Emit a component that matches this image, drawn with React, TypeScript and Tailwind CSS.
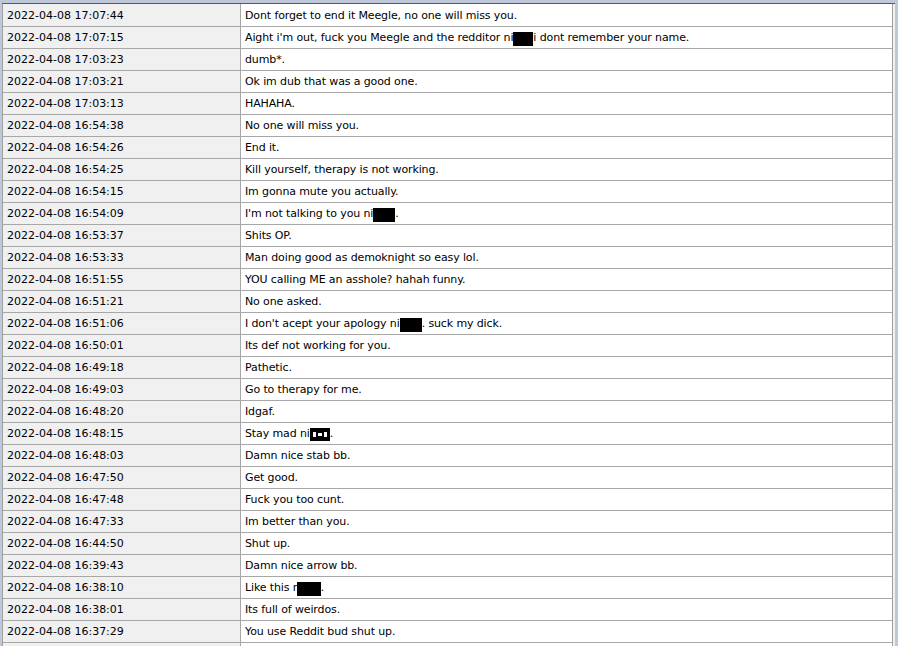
import React from 'react';

type Row = { time: string; msg: React.ReactNode };

// redacted block, drawn over the text like a marker
const Bar = ({ w = 20, ml = 0 }: { w?: number; ml?: number }) => (
  <span
    className="inline-block bg-black h-[14px] align-[-3px]"
    style={{ width: w, marginLeft: ml }}
  />
);

const rows: Row[] = [
  { time: '2022-04-08 17:07:44', msg: 'Dont forget to end it Meegle, no one will miss you.' },
  {
    time: '2022-04-08 17:07:15',
    msg: (
      <>
        Aight i'm out, fuck you Meegle and the redditor ni<Bar w={20} />i dont remember your name.
      </>
    ),
  },
  { time: '2022-04-08 17:03:23', msg: 'dumb*.' },
  { time: '2022-04-08 17:03:21', msg: 'Ok im dub that was a good one.' },
  { time: '2022-04-08 17:03:13', msg: 'HAHAHA.' },
  { time: '2022-04-08 16:54:38', msg: 'No one will miss you.' },
  { time: '2022-04-08 16:54:26', msg: 'End it.' },
  { time: '2022-04-08 16:54:25', msg: 'Kill yourself, therapy is not working.' },
  { time: '2022-04-08 16:54:15', msg: 'Im gonna mute you actually.' },
  {
    time: '2022-04-08 16:54:09',
    msg: (
      <>
        I'm not talking to you ni<Bar w={22} />.
      </>
    ),
  },
  { time: '2022-04-08 16:53:37', msg: 'Shits OP.' },
  { time: '2022-04-08 16:53:33', msg: 'Man doing good as demoknight so easy lol.' },
  { time: '2022-04-08 16:51:55', msg: 'YOU calling ME an asshole? hahah funny.' },
  { time: '2022-04-08 16:51:21', msg: 'No one asked.' },
  {
    time: '2022-04-08 16:51:06',
    msg: (
      <>
        I don't acept your apology ni<Bar w={22} />. suck my dick.
      </>
    ),
  },
  { time: '2022-04-08 16:50:01', msg: 'Its def not working for you.' },
  { time: '2022-04-08 16:49:18', msg: 'Pathetic.' },
  { time: '2022-04-08 16:49:03', msg: 'Go to therapy for me.' },
  { time: '2022-04-08 16:48:20', msg: 'Idgaf.' },
  {
    time: '2022-04-08 16:48:15',
    msg: (
      <>
        Stay mad ni
        <span className="inline-flex items-center justify-center gap-[2px] bg-black h-[13px] w-[20px] align-[-3px]">
          <span className="w-[3px] h-[5px] bg-white" />
          <span className="w-[4px] h-[3px] bg-white" />
          <span className="w-[3px] h-[5px] bg-white" />
        </span>
        .
      </>
    ),
  },
  { time: '2022-04-08 16:48:03', msg: 'Damn nice stab bb.' },
  { time: '2022-04-08 16:47:50', msg: 'Get good.' },
  { time: '2022-04-08 16:47:48', msg: 'Fuck you too cunt.' },
  { time: '2022-04-08 16:47:33', msg: 'Im better than you.' },
  { time: '2022-04-08 16:44:50', msg: 'Shut up.' },
  { time: '2022-04-08 16:39:43', msg: 'Damn nice arrow bb.' },
  {
    time: '2022-04-08 16:38:10',
    msg: (
      <>
        Like this n<Bar w={24} ml={-3} />.
      </>
    ),
  },
  { time: '2022-04-08 16:38:01', msg: 'Its full of weirdos.' },
  { time: '2022-04-08 16:37:29', msg: 'You use Reddit bud shut up.' },
  { time: '', msg: '' },
];

export default function App() {
  return (
    <div
      className="w-[898px] h-[646px] overflow-hidden bg-[#bfc8da] pt-[3px] pl-[2px] pr-[3px] text-[11px] text-black"
      style={{ fontFamily: '"DejaVu Sans", Verdana, sans-serif' }}
    >
      <div className="border-t border-[#5a5a5a] bg-[#f0f0f0] pr-[2px] h-full">
        <div className="border-l border-r border-[#a0a0a0] h-full">
          {rows.map((r, i) => (
            <div
              key={i}
              className={`flex border-b border-[#a7a7a7] ${i === 0 ? 'h-[23px]' : 'h-[22px]'}`}
            >
              <div className="w-[238px] shrink-0 bg-[#f0f0f0] border-r border-[#a7a7a7] pl-[4px] pt-[2px] flex items-center whitespace-nowrap">
                {r.time}
              </div>
              <div className="flex-1 bg-white pl-[4px] pt-[2px] flex items-center whitespace-nowrap tracking-[-0.12px]">
                {r.msg}
              </div>
            </div>
          ))}
        </div>
      </div>
    </div>
  );
}
